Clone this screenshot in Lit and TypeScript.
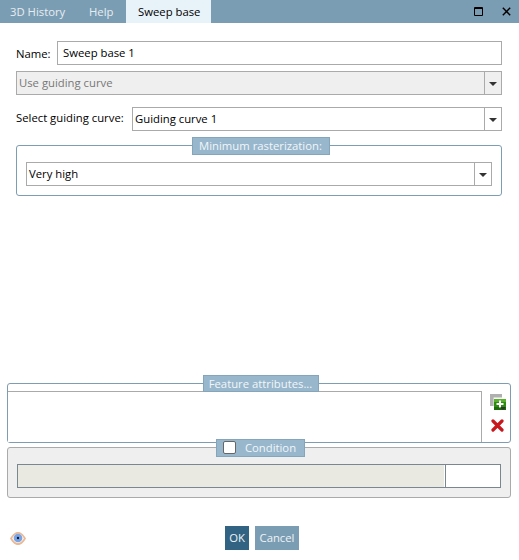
import { LitElement, html, css } from "lit";
import { customElement } from "lit/decorators.js";

@customElement("app-root")
export class AppRoot extends LitElement {
  static styles = css`
    :host { display: block; width: 519px; height: 560px; background: #fff; font-family: "Open Sans", "Noto Sans", sans-serif; font-size: 11.3px; color: #000; overflow: hidden; }
    * { box-sizing: border-box; }
    .page { height: 560px; display: flex; flex-direction: column; }
    .titlebar { height: 23px; background: #7b9db3; display: flex; align-items: stretch; flex: none; }
    .tab { color: #e6edf2; display: flex; align-items: center; padding: 0 0 1px 10px; width: 79px; }
    .tab.help { width: 47px; }
    .tab.active { background: #e8f2f9; color: #000; width: 85px; padding-left: 12px; }
    .winbtns { margin-left: auto; display: flex; align-items: center; gap: 19px; padding-right: 8px; }
    .winbtns svg { display: block; }
    .form { padding: 18px 17px 0 16px; display: flex; flex-direction: column; }
    .row { display: flex; align-items: center; }
    .row .lbl { flex: none; }
    .name-lbl { width: 41px; }
    .sel-lbl { width: 116px; padding-bottom: 3px; }
    .input { flex: 1; height: 24px; border: 1px solid #aaa; display: flex; align-items: center; padding: 0 5px 1px; background: #fff; min-width: 0; }
    .combo { flex: 1; height: 24px; border: 1px solid #aaa; display: flex; background: #fff; min-width: 0; }
    .combo .val { flex: 1; display: flex; align-items: center; padding: 0 2px 1px; }
    .combo .btn { width: 17px; border-left: 1px solid #aaa; display: flex; align-items: center; justify-content: center; flex: none; }
    .combo .btn i { display: block; width: 0; height: 0; border-left: 4px solid transparent; border-right: 4px solid transparent; border-top: 4px solid #333; margin-top: 1px; }
    .combo.disabled { background: #efefef; color: #777; }
    .mt6 { margin-top: 6px; }
    .mt12 { margin-top: 12px; }
    .group { position: relative; border: 1px solid #7f9db2; border-radius: 3px; }
    .legend { position: absolute; left: 0; right: 0; display: flex; justify-content: center; }
    .legend span { background: #98b6cc; border: 1px solid #85a5bb; color: #f1f6f9; display: flex; align-items: center; justify-content: center; }
    .g1 { margin-top: 14px; height: 51px; padding: 16px 9px 0; display: flex; }
    .g1 .legend { top: -9px; padding-left: 3px; }
    .g1 .legend span { width: 138px; height: 18px; padding-bottom: 1px; }
    .bottom { margin-top: auto; padding: 0 8px 0 7px; display: flex; flex-direction: column; }
    .g2 { height: 60px; display: flex; }
    .g2 .legend { top: -9px; padding-left: 3px; }
    .g2 .legend span { width: 116px; height: 17px; padding-bottom: 1px; }
    .list { width: 474px; height: 51px; margin-top: 7px; border: 1px solid #aaa; border-width: 1px 1px 0 0; flex: none; background: #fff; }
    .g2-tools { flex: 1; display: flex; flex-direction: column; align-items: center; padding: 10px 0 0 3px; gap: 9px; }
    .g2-tools svg { display: block; }
    .g3 { margin-top: 4px; height: 51px; border-color: #aaa; background: #efefef; padding: 16px 9px 0; }
    .g3 .legend { top: -9px; padding-left: 3px; }
    .g3 .legend span { width: 89px; height: 18px; gap: 9px; padding: 0 2px 1px 0; }
    .cb { width: 13px; height: 13px; background: #fff; border: 1px solid #666; border-radius: 2px; flex: none; }
    .bar { height: 24px; border: 1px solid #7a8791; display: flex; background: #fff; }
    .bar .fill { width: 426px; background: #e9e9e1; border-right: 1px solid #fff; box-sizing: content-box; }
    .bar .sep { width: 1px; background: #7a8791; }
    .footer { height: 24px; margin: 28px 0 10px; padding-left: 3px; display: flex; align-items: center; }
    .eye { display: block; flex: none; }
    .buttons { margin-left: 199px; display: flex; gap: 6px; }
    .btn-ok, .btn-cancel { height: 24px; display: flex; align-items: center; justify-content: center; color: #eef3f6; padding-bottom: 1px; }
    .btn-ok { width: 24px; background: #336383; }
    .btn-cancel { width: 44px; background: #7b9db3; }
  `;

  render() {
    return html`<div class="page">
      <div class="titlebar">
        <div class="tab">3D History</div>
        <div class="tab help">Help</div>
        <div class="tab active">Sweep base</div>
        <div class="winbtns">
          <svg width="9" height="9" viewBox="0 0 9 9"><path d="M.5.5h8v8h-8z M0 1.500h9" fill="none" stroke="#000"/></svg>
          <svg width="9" height="9" viewBox="0 0 9 9"><path d="M.8.8l7.400 7.400M8.200.8L.8 8.200" fill="none" stroke="#000" stroke-width="1.400"/></svg>
        </div>
      </div>
      <div class="form">
        <div class="row"><span class="lbl name-lbl">Name:</span><div class="input">Sweep base 1</div></div>
        <div class="row mt6"><div class="combo disabled"><div class="val">Use guiding curve</div><div class="btn"><i></i></div></div></div>
        <div class="row mt12"><span class="lbl sel-lbl">Select guiding curve:</span><div class="combo"><div class="val">Guiding curve 1</div><div class="btn"><i></i></div></div></div>
        <div class="group g1">
          <div class="legend"><span>Minimum rasterization:</span></div>
          <div class="combo"><div class="val">Very high</div><div class="btn"><i></i></div></div>
        </div>
      </div>
      <div class="bottom">
        <div class="group g2">
          <div class="legend"><span>Feature attributes...</span></div>
          <div class="list"></div>
          <div class="g2-tools">
            <svg width="16" height="16" viewBox="0 0 16 16">
              <path d="M1.800 12V1.800H12" fill="none" stroke="#b0b0b0" stroke-width="3.600"/>
              <rect x="4" y="5" width="12" height="11" fill="#2f8a12"/>
              <rect x="4" y="5" width="12" height="3" fill="#58b02c"/>
              <rect x="4" y="13" width="12" height="3" fill="#1d6a0d"/>
              <path d="M10 6.500v7M6.500 10h7" stroke="#fff" stroke-width="2"/>
              <path d="M10.500 13h5l-1.500 2.500h-2z" fill="#333"/>
            </svg>
            <svg width="13" height="13" viewBox="0 0 13 13"><path d="M2 2l9 9M11 2l-9 9" stroke="#c8171d" stroke-width="3.200" stroke-linecap="round"/></svg>
          </div>
        </div>
        <div class="group g3">
          <div class="legend"><span><i class="cb"></i>Condition</span></div>
          <div class="bar"><div class="fill"></div><div class="sep"></div></div>
        </div>
        <div class="footer">
          <svg class="eye" width="16" height="13" viewBox="0 0 16 13">
            <path d="M0 6.500C3 1.500 5.500 0 8 0s5 1.500 8 6.500C13 11.500 10.500 13 8 13S3 11.500 0 6.500z" fill="#e9b896"/>
            <path d="M2 6.500C4 3 6 1.700 8 1.700s4 1.300 6 4.800C12 9.500 10 11 8 11S4 9.500 2 6.500z" fill="#fbf3ec"/>
            <circle cx="8" cy="6" r="4.300" fill="#78a4e6"/>
            <circle cx="8" cy="6" r="1.200" fill="#101828"/>
          </svg>
          <div class="buttons"><div class="btn-ok">OK</div><div class="btn-cancel">Cancel</div></div>
        </div>
      </div>
    </div>`;
  }
}
